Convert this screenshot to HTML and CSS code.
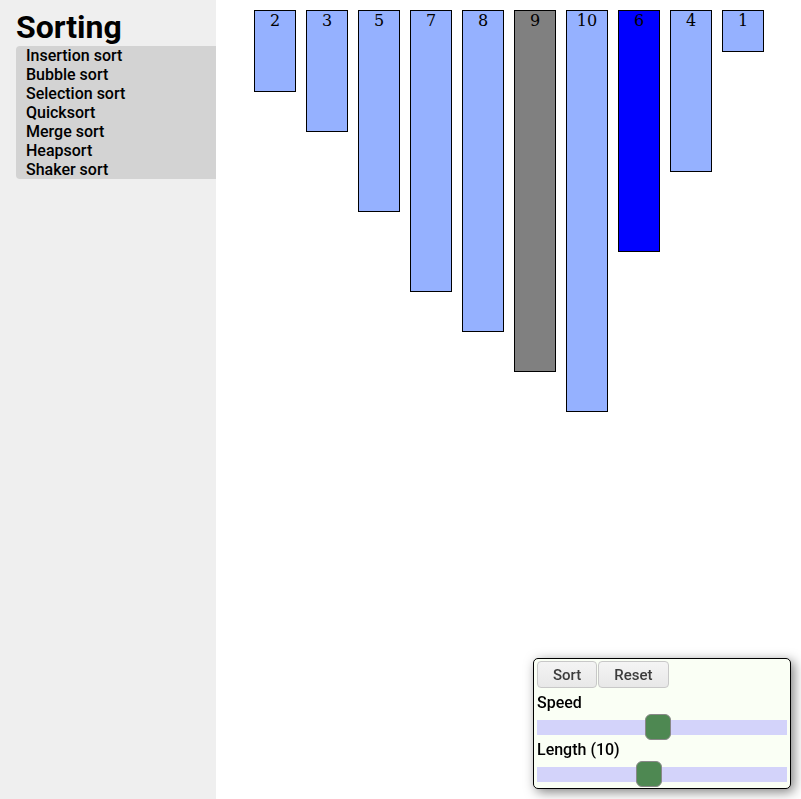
FILE: index.html
```html
<!DOCTYPE html>
<html>
<head>
<meta charset="utf-8">
<link rel="stylesheet" href="styles.css">
</head>
<body>
<div class="app">
  <aside class="sidebar">
    <h1 class="title">Sorting</h1>
    <ul class="algos">
      <li>Insertion sort</li>
      <li>Bubble sort</li>
      <li>Selection sort</li>
      <li>Quicksort</li>
      <li>Merge sort</li>
      <li>Heapsort</li>
      <li>Shaker sort</li>
    </ul>
  </aside>
  <main class="bars">
    <div class="bar" style="height:80px">2</div>
    <div class="bar" style="height:120px">3</div>
    <div class="bar" style="height:200px">5</div>
    <div class="bar" style="height:280px">7</div>
    <div class="bar" style="height:320px">8</div>
    <div class="bar bar-compare" style="height:360px">9</div>
    <div class="bar" style="height:400px">10</div>
    <div class="bar bar-active" style="height:240px">6</div>
    <div class="bar" style="height:160px">4</div>
    <div class="bar" style="height:40px">1</div>
  </main>
</div>
<div class="panel">
  <div class="buttons">
    <button class="btn">Sort</button>
    <button class="btn">Reset</button>
  </div>
  <label class="label">Speed</label>
  <div class="slider"><div class="track"></div><div class="thumb" style="left:108px"></div></div>
  <label class="label">Length (10)</label>
  <div class="slider"><div class="track"></div><div class="thumb" style="left:99px"></div></div>
</div>
</body>
</html>
```
FILE: styles.css
```css
html, body {
  margin: 0;
  padding: 0;
  height: 100%;
  background: #ffffff;
}
body {
  font-family: Roboto, "Liberation Sans", sans-serif;
}
.app {
  display: flex;
  height: 799px;
}
.sidebar {
  width: 200px;
  flex: none;
  background: #efefef;
  padding: 8px 0 0 16px;
}
.title {
  margin: 0;
  font-size: 32px;
  font-weight: 700;
  line-height: 38px;
  color: #000;
}
.algos {
  list-style: none;
  margin: 0;
  padding: 0 0 0 10px;
  background: #d3d3d3;
  border-radius: 4px 0 0 4px;
  font-size: 16px;
  font-weight: 500;
  line-height: 19px;
  color: #000;
}
.bars {
  display: flex;
  align-items: flex-start;
  gap: 10px;
  padding: 10px 0 0 38px;
}
.bar {
  width: 40px;
  flex: none;
  border: 1px solid #000;
  background: #95b1ff;
  font-family: "DejaVu Serif", serif;
  font-size: 16px;
  text-align: center;
  line-height: 19px;
  color: #000;
}
.bar-compare {
  background: #808080;
}
.bar-active {
  background: #0000ff;
}
.panel {
  position: fixed;
  right: 10px;
  bottom: 10px;
  width: 251px;
  padding: 2px 2px 1px 3px;
  border: 1px solid #000;
  border-radius: 5px;
  background: #fafff5;
  box-shadow: 3px 3px 12px rgba(0, 0, 0, 0.5);
  display: flex;
  flex-direction: column;
}
.buttons {
  display: flex;
  gap: 1px;
  margin-bottom: 5px;
}
.btn {
  height: 27px;
  padding: 0 15px;
  border: 1px solid #c8c8c8;
  border-radius: 4px;
  background: linear-gradient(#f4f4f4, #e8e8e8);
  font-family: Roboto, sans-serif;
  font-size: 15px;
  font-weight: 500;
  color: #3c3c3c;
}
.label {
  font-size: 16px;
  font-weight: 500;
  line-height: 20px;
  color: #000;
}
.slider {
  position: relative;
  height: 27px;
  width: 250px;
}
.track {
  margin-top: 7px;
  width: 100%;
  height: 15px;
  background: #d3d3fa;
}
.thumb {
  position: absolute;
  top: 1px;
  width: 24px;
  height: 24px;
  border: 1px solid #888;
  border-radius: 6px;
  background: #4e8852;
}
```
